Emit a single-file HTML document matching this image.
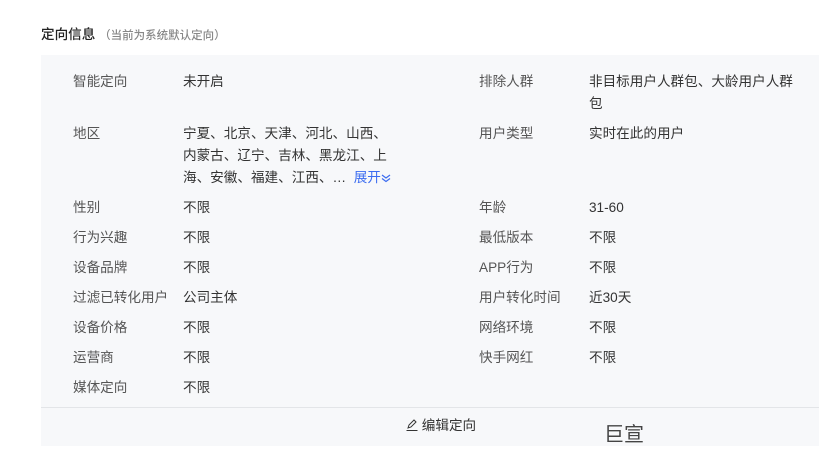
<!DOCTYPE html>
<html><head><meta charset="utf-8"><style>
body{margin:0;width:819px;height:465px;background:#fff;font-family:"Liberation Sans","Noto Sans CJK SC",sans-serif;position:relative;overflow:hidden}
.t{position:absolute;font-size:13.6px;line-height:22px;color:#333;white-space:nowrap}
.l{color:#555}
.panel{position:absolute;left:41px;top:55px;width:778px;height:391px;background:#f7f8fa}
.div{position:absolute;left:41px;top:407px;width:778px;height:1px;background:#e3e5e8}
</style></head><body>
<div class="t" style="left:41px;top:24px;color:#222;font-weight:500">定向信息 <span style="font-size:11.5px;color:#888">（当前为系统默认定向）</span></div>
<div class="panel"></div>
<div class="div"></div>
<div class="t l" style="left:73px;top:71px">智能定向</div><div class="t" style="left:183px;top:71px">未开启</div>
<div class="t l" style="left:479px;top:71px">排除人群</div><div class="t" style="left:589px;top:71px;white-space:normal;width:212px">非目标用户人群包、大龄用户人群包</div>
<div class="t l" style="left:73px;top:123px">地区</div><div class="t" style="left:183px;top:123px">宁夏、北京、天津、河北、山西、<br>内蒙古、辽宁、吉林、黑龙江、上<br>海、安徽、福建、江西、…&nbsp; <span style="color:#3b6cf0">展开<svg width="10" height="10" viewBox="0 0 10 10" style="vertical-align:-1px"><path d="M1 2l4 3 4-3M1 5.5l4 3 4-3" fill="none" stroke="#3b6cf0" stroke-width="1.2"/></svg></span></div>
<div class="t l" style="left:479px;top:123px">用户类型</div><div class="t" style="left:589px;top:123px">实时在此的用户</div>
<div class="t l" style="left:73px;top:197px">性别</div><div class="t" style="left:183px;top:197px">不限</div>
<div class="t l" style="left:479px;top:197px">年龄</div><div class="t" style="left:589px;top:197px">31-60</div>
<div class="t l" style="left:73px;top:227px">行为兴趣</div><div class="t" style="left:183px;top:227px">不限</div>
<div class="t l" style="left:479px;top:227px">最低版本</div><div class="t" style="left:589px;top:227px">不限</div>
<div class="t l" style="left:73px;top:257px">设备品牌</div><div class="t" style="left:183px;top:257px">不限</div>
<div class="t l" style="left:479px;top:257px">APP行为</div><div class="t" style="left:589px;top:257px">不限</div>
<div class="t l" style="left:73px;top:287px">过滤已转化用户</div><div class="t" style="left:183px;top:287px">公司主体</div>
<div class="t l" style="left:479px;top:287px">用户转化时间</div><div class="t" style="left:589px;top:287px">近30天</div>
<div class="t l" style="left:73px;top:317px">设备价格</div><div class="t" style="left:183px;top:317px">不限</div>
<div class="t l" style="left:479px;top:317px">网络环境</div><div class="t" style="left:589px;top:317px">不限</div>
<div class="t l" style="left:73px;top:347px">运营商</div><div class="t" style="left:183px;top:347px">不限</div>
<div class="t l" style="left:479px;top:347px">快手网红</div><div class="t" style="left:589px;top:347px">不限</div>
<div class="t l" style="left:73px;top:377px">媒体定向</div><div class="t" style="left:183px;top:377px">不限</div>
<div class="t" style="left:406px;top:415px;color:#333"><svg width="12" height="12" viewBox="0 0 12 12" style="vertical-align:-1px"><path d="M2 9l1-3 5-5 2 2-5 5z" fill="none" stroke="#333" stroke-width="1"/><path d="M0.5 11.5h11" stroke="#333" stroke-width="1"/></svg> 编辑定向</div>
<div class="t" style="left:604px;top:422px;font-size:20px;line-height:26px;color:#444">巨宣</div>
</body></html>
